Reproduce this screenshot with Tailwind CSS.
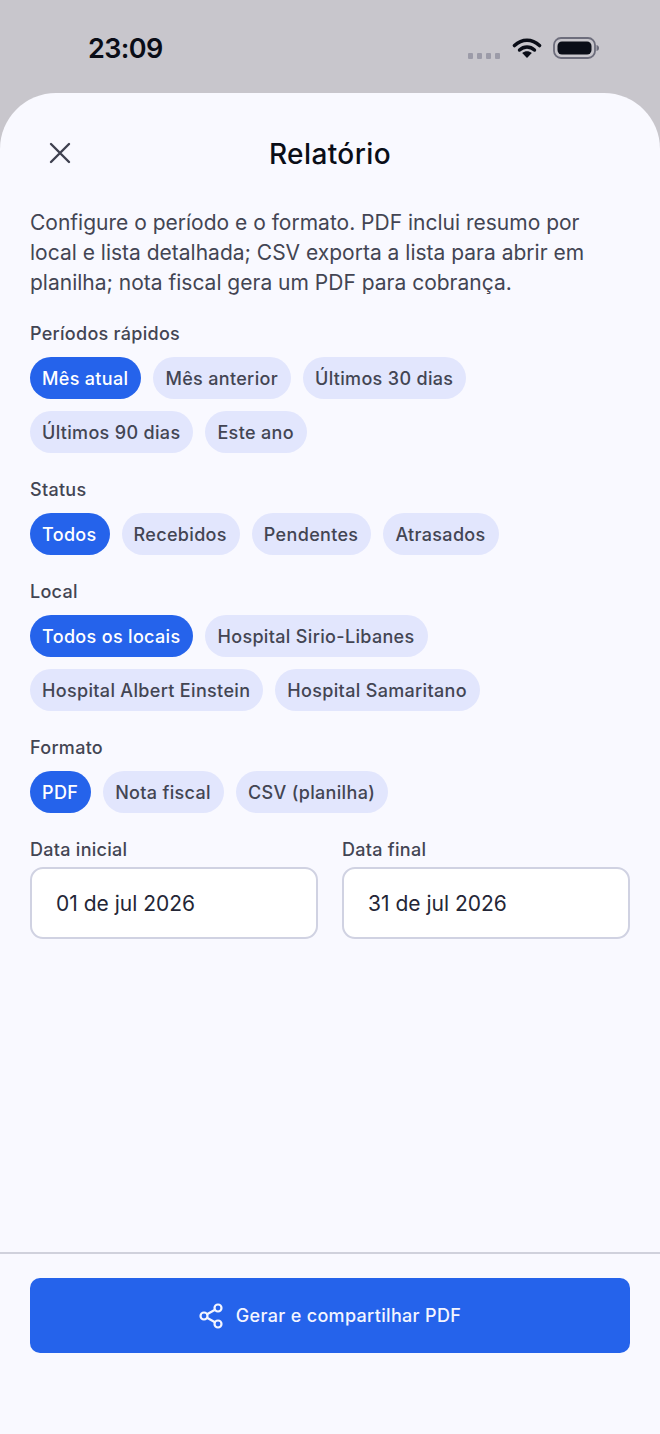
<!DOCTYPE html>
<html lang="pt">
<head>
<meta charset="utf-8">
<script src="https://cdn.jsdelivr.net/npm/@tailwindcss/browser@4"></script>
</head>
<body class="m-0">
<div class="w-[660px] h-[1434px] overflow-hidden bg-[#c8c6cc] flex flex-col font-['Inter',sans-serif]">
  <div class="h-[93px] shrink-0 flex justify-between items-start pl-[88px] pr-[61px]">
    <span class="mt-[32px] text-[27px] leading-[34px] font-semibold tracking-[-0.6px] text-[#0a0d17]">23:09</span>
    <div class="flex items-center mt-[37px] h-[22px]">
      <div class="flex gap-[3.500px] mt-[15px] mr-[12px]">
        <span class="w-[5.500px] h-[6px] rounded-[1px] bg-[#9c9ba8]"></span><span class="w-[5.500px] h-[6px] rounded-[1px] bg-[#9c9ba8]"></span><span class="w-[5.500px] h-[6px] rounded-[1px] bg-[#9c9ba8]"></span><span class="w-[5.500px] h-[6px] rounded-[1px] bg-[#9c9ba8]"></span>
      </div>
      <svg width="30" height="22" viewBox="0 0 30 22" fill="none" class="mr-[11px]">
        <path d="M2.500 8.500C10 1.500 20 1.500 27.500 8.500" stroke="#0a0d17" stroke-width="3.600" stroke-linecap="round"/>
        <path d="M7.500 13C12 9 18 9 22.500 13" stroke="#0a0d17" stroke-width="3.400" stroke-linecap="round"/>
        <path d="M10.200 16C13 13.600 17 13.600 19.800 16L15 21Z" fill="#0a0d17"/>
      </svg>
      <svg width="46" height="22" viewBox="0 0 46 22" fill="none">
        <rect x="1" y="1" width="41" height="20" rx="7" stroke="#6d6d7c" stroke-width="1.800"/>
        <rect x="4.500" y="4.500" width="34" height="13" rx="4.500" fill="#0a0d17"/>
        <path d="M43.500 8C45.300 8.500 46 9.500 46 11S45.300 13.500 43.500 14Z" fill="#6d6d7c"/>
      </svg>
    </div>
  </div>
  <div class="flex-1 bg-[#f9f9ff] rounded-t-[56px] flex flex-col">
    <div class="relative h-[60px] mt-[30px] flex items-center justify-center shrink-0">
      <svg width="24" height="24" viewBox="0 0 24 24" fill="none" class="absolute left-[48px] top-[18px]">
        <path d="M3 3L21 21M21 3L3 21" stroke="#3f4150" stroke-width="2.400" stroke-linecap="round"/>
      </svg>
      <h1 class="mt-[1px] text-[28px] leading-[34px] font-[550] tracking-[0.4px] text-[#0a0d17]">Relatório</h1>
    </div>
    <div class="flex-1 px-[30px] pt-[25px]">
      <p class="text-[21px] leading-[30px] text-[#434553]">Configure o período e o formato. PDF inclui resumo por local e lista detalhada; CSV exporta a lista para abrir em planilha; nota fiscal gera um PDF para cobrança.</p>

      <div class="mt-[24px] text-[18px] tracking-[0.28px] leading-[24px] font-[550] text-[#434553] mb-[11px]">Períodos rápidos</div>
      <div class="flex flex-wrap gap-[12px]">
        <span class="h-[42px] pl-[12px] pr-[13px] rounded-full bg-[#2563eb] text-white text-[18px] tracking-[0.33px] font-[550] flex items-center">Mês atual</span>
        <span class="h-[42px] pl-[12px] pr-[13px] rounded-full bg-[#e2e6fd] text-[#434553] text-[18px] tracking-[0.33px] font-[550] flex items-center">Mês anterior</span>
        <span class="h-[42px] pl-[12px] pr-[13px] rounded-full bg-[#e2e6fd] text-[#434553] text-[18px] tracking-[0.33px] font-[550] flex items-center">Últimos 30 dias</span>
        <span class="h-[42px] pl-[12px] pr-[13px] rounded-full bg-[#e2e6fd] text-[#434553] text-[18px] tracking-[0.33px] font-[550] flex items-center">Últimos 90 dias</span>
        <span class="h-[42px] pl-[12px] pr-[13px] rounded-full bg-[#e2e6fd] text-[#434553] text-[18px] tracking-[0.33px] font-[550] flex items-center">Este ano</span>
      </div>

      <div class="mt-[25px] text-[18px] tracking-[0.28px] leading-[24px] font-[550] text-[#434553] mb-[11px]">Status</div>
      <div class="flex flex-wrap gap-[12px]">
        <span class="h-[42px] pl-[12px] pr-[13px] rounded-full bg-[#2563eb] text-white text-[18px] tracking-[0.33px] font-[550] flex items-center">Todos</span>
        <span class="h-[42px] pl-[12px] pr-[13px] rounded-full bg-[#e2e6fd] text-[#434553] text-[18px] tracking-[0.33px] font-[550] flex items-center">Recebidos</span>
        <span class="h-[42px] pl-[12px] pr-[13px] rounded-full bg-[#e2e6fd] text-[#434553] text-[18px] tracking-[0.33px] font-[550] flex items-center">Pendentes</span>
        <span class="h-[42px] pl-[12px] pr-[13px] rounded-full bg-[#e2e6fd] text-[#434553] text-[18px] tracking-[0.33px] font-[550] flex items-center">Atrasados</span>
      </div>

      <div class="mt-[25px] text-[18px] tracking-[0.28px] leading-[24px] font-[550] text-[#434553] mb-[11px]">Local</div>
      <div class="flex flex-wrap gap-[12px]">
        <span class="h-[42px] pl-[12px] pr-[13px] rounded-full bg-[#2563eb] text-white text-[18px] tracking-[0.33px] font-[550] flex items-center">Todos os locais</span>
        <span class="h-[42px] pl-[12px] pr-[13px] rounded-full bg-[#e2e6fd] text-[#434553] text-[18px] tracking-[0.33px] font-[550] flex items-center">Hospital Sirio-Libanes</span>
        <span class="h-[42px] pl-[12px] pr-[13px] rounded-full bg-[#e2e6fd] text-[#434553] text-[18px] tracking-[0.33px] font-[550] flex items-center">Hospital Albert Einstein</span>
        <span class="h-[42px] pl-[12px] pr-[13px] rounded-full bg-[#e2e6fd] text-[#434553] text-[18px] tracking-[0.33px] font-[550] flex items-center">Hospital Samaritano</span>
      </div>

      <div class="mt-[25px] text-[18px] tracking-[0.28px] leading-[24px] font-[550] text-[#434553] mb-[11px]">Formato</div>
      <div class="flex flex-wrap gap-[12px]">
        <span class="h-[42px] pl-[12px] pr-[13px] rounded-full bg-[#2563eb] text-white text-[18px] tracking-[0.33px] font-[550] flex items-center">PDF</span>
        <span class="h-[42px] pl-[12px] pr-[13px] rounded-full bg-[#e2e6fd] text-[#434553] text-[18px] tracking-[0.33px] font-[550] flex items-center">Nota fiscal</span>
        <span class="h-[42px] pl-[12px] pr-[13px] rounded-full bg-[#e2e6fd] text-[#434553] text-[18px] tracking-[0.33px] font-[550] flex items-center">CSV (planilha)</span>
      </div>

      <div class="mt-[25px] grid grid-cols-2 gap-[24px]">
        <div>
          <div class="text-[18px] tracking-[0.28px] leading-[24px] font-[550] text-[#434553] mb-[5px]">Data inicial</div>
          <div class="h-[72px] bg-white border-2 border-[#d0d2e2] rounded-[13px] flex items-center pl-[24px] pt-[1px] text-[21px] text-[#242636]">01 de jul 2026</div>
        </div>
        <div>
          <div class="text-[18px] tracking-[0.28px] leading-[24px] font-[550] text-[#434553] mb-[5px]">Data final</div>
          <div class="h-[72px] bg-white border-2 border-[#d0d2e2] rounded-[13px] flex items-center pl-[24px] pt-[1px] text-[21px] text-[#242636]">31 de jul 2026</div>
        </div>
      </div>
    </div>
    <div class="h-[182px] shrink-0 border-t-2 border-[#d0d1dc] px-[30px] pt-[24px]">
      <div class="h-[75px] bg-[#2563eb] rounded-[10px] flex items-center justify-center gap-[13px] text-white">
        <svg width="24" height="26" viewBox="0 0 24 26" fill="none" stroke="#f4f5ff" stroke-width="2.200">
          <circle cx="5" cy="13" r="3.500"/><circle cx="19" cy="5" r="3.500"/><circle cx="19" cy="21" r="3.500"/>
          <path d="M8 11.300L16 6.700M8 14.700L16 19.300"/>
        </svg>
        <span class="text-[18px] tracking-[0.33px] font-[550] text-[#f4f5ff]">Gerar e compartilhar PDF</span>
      </div>
    </div>
  </div>
</div>
</body>
</html>
